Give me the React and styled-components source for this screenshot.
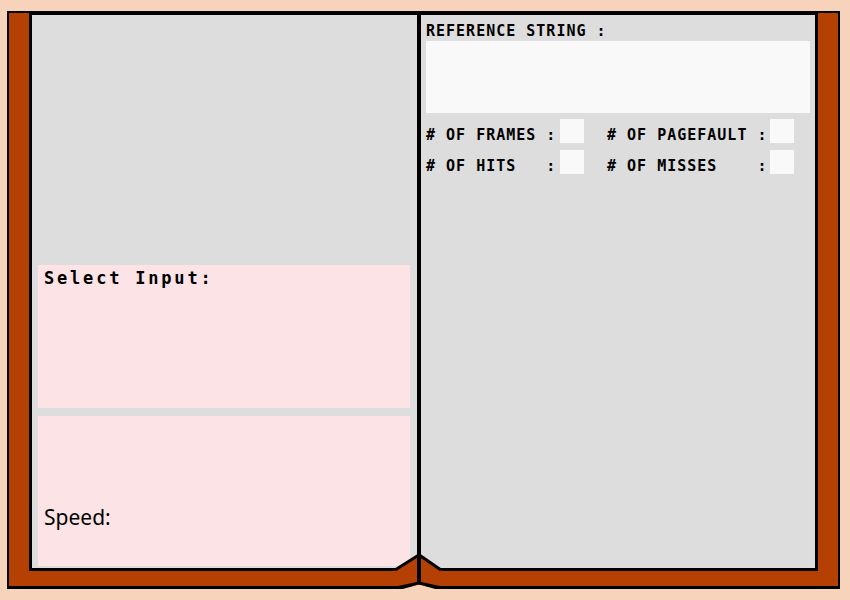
import React from 'react'
import styled, { createGlobalStyle } from 'styled-components'

const PEACH = '#f8d3bc'
const LEATHER = '#b44004'
const PAGE = '#dddddd'
const PINK = '#fce4e6'
const FIELD = '#f9f9f9'

const GlobalStyle = createGlobalStyle`
  body {
    margin: 0;
    background: ${PEACH};
  }
  #root {
    padding: 11px 0 0 7px;
  }
`

const Cover = styled.div`
  position: relative;
  box-sizing: border-box;
  width: 833px;
  height: 578px;
  display: flex;
  padding: 0 20px 15px;
  border: 2px solid #000;
  border-bottom-width: 3px;
  background: ${LEATHER};

  &::after {
    content: '';
    position: absolute;
    left: 209px;
    bottom: -5px;
    width: 411px;
    height: 2px;
    background: #000;
  }
`

const Book = styled.div`
  flex: 1;
  display: flex;
  gap: 4px;
  border: 3px solid #000;
  border-top-width: 2px;
  background: #000;
`

const LeftPage = styled.div`
  box-sizing: border-box;
  width: 385px;
  display: flex;
  flex-direction: column;
  justify-content: flex-end;
  gap: 8px;
  padding: 0 7px 2px 6px;
  background: ${PAGE};
`

const Panel = styled.div`
  box-sizing: border-box;
  height: ${(p) => p.$h}px;
  padding: ${(p) => p.$pad};
  background: ${PINK};
`

const SelectLabel = styled.div`
  font-family: 'DejaVu Sans Mono', monospace;
  font-weight: bold;
  font-size: 17px;
  line-height: 17px;
  letter-spacing: 2.8px;
  color: #000;
`

const SpeedLabel = styled.div`
  font-family: 'Noto Sans', sans-serif;
  font-size: 21px;
  line-height: 21px;
  color: #000;
`

const RightPage = styled.div`
  flex: 1;
  padding: 8px 5px 0;
  background: ${PAGE};
`

const Title = styled.div`
  font-family: 'DejaVu Sans Mono', monospace;
  font-weight: bold;
  font-size: 15px;
  line-height: 16px;
  letter-spacing: 1px;
  color: #000;
`

const RefField = styled.div`
  height: 72px;
  margin-top: 2px;
  background: ${FIELD};
`

const Stats = styled.div`
  display: grid;
  grid-template-columns: 134px 24px 186px 24px;
  grid-auto-rows: 24px;
  row-gap: 7px;
  align-items: end;
  margin-top: 6px;

  & > :nth-child(4n + 3) {
    padding-left: 23px;
  }
`

const StatLabel = styled.span`
  font-family: 'DejaVu Sans Mono', monospace;
  font-weight: bold;
  font-size: 15px;
  line-height: 16px;
  letter-spacing: 1px;
  white-space: pre;
  color: #000;
`

const StatBox = styled.div`
  width: 24px;
  height: 24px;
  align-self: stretch;
  background: ${FIELD};
`

const SpineFold = styled.svg`
  position: absolute;
  left: 371px;
  top: 527px;
  width: 80px;
  height: 56px;
  overflow: visible;
  pointer-events: none;
`

const stats = [
  ['# OF FRAMES :', '# OF PAGEFAULT :'],
  ['# OF HITS   :', '# OF MISSES    :'],
]

export default function App() {
  return (
    <>
      <GlobalStyle />
      <Cover>
        <Book>
          <LeftPage>
            <Panel $h={143} $pad="5px 6px">
              <SelectLabel>Select Input:</SelectLabel>
            </Panel>
            <Panel $h={150} $pad="91px 6px 0">
              <SpeedLabel>Speed:</SpeedLabel>
            </Panel>
          </LeftPage>
          <RightPage>
            <Title>REFERENCE STRING :</Title>
            <RefField />
            <Stats>
              {stats.map(([a, b]) => (
                <React.Fragment key={a}>
                  <StatLabel>{a}</StatLabel>
                  <StatBox />
                  <StatLabel>{b}</StatLabel>
                  <StatBox />
                </React.Fragment>
              ))}
            </Stats>
          </RightPage>
        </Book>
        <SpineFold viewBox="380 540 80 56">
          <polygon points="392,572 396,569.5 417,556 417,572" fill={LEATHER} />
          <polygon points="421,556 440,569.5 444,572 421,572" fill={LEATHER} />
          <line x1="395" y1="570" x2="418" y2="555.5" stroke="#000" strokeWidth="3" />
          <line x1="420" y1="555.5" x2="441" y2="570" stroke="#000" strokeWidth="3" />
          <rect x="417" y="540" width="4" height="44" fill="#000" />
          <polygon points="399,590 419,584.5 439,590 439,597 399,597" fill={PEACH} />
          <polyline points="396,588 419,583 442,588" fill="none" stroke="#000" strokeWidth="3" />
        </SpineFold>
      </Cover>
    </>
  )
}
